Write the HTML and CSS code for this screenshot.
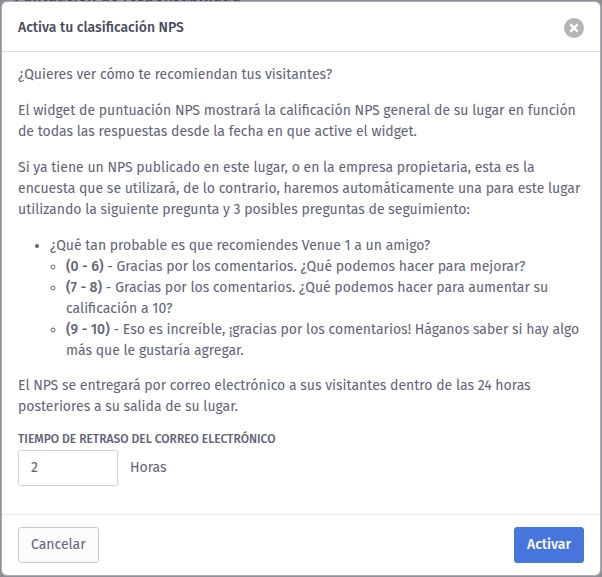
FILE: index.html
```html
<!DOCTYPE html>
<html lang="es">
<head>
<meta charset="utf-8">
<meta name="viewport" content="width=device-width, initial-scale=1">
<title>Activa tu clasificación NPS</title>
<link rel="stylesheet" href="styles.css">
</head>
<body>
<div class="page-behind" aria-hidden="true">Puntuación de responsabilidad</div>
<form class="modal" role="dialog" aria-labelledby="modal-title">
  <header class="modal-header">
    <h1 class="modal-title" id="modal-title">Activa tu clasificación NPS</h1>
    <button class="close" type="button" aria-label="Cerrar">
      <svg viewBox="0 0 20 20" width="20" height="20" aria-hidden="true">
        <circle cx="10" cy="10" r="10" fill="#b5b5b5"/>
        <path d="M6.4 6.4l7.2 7.2M13.6 6.4l-7.2 7.2" stroke="#fff" stroke-width="2.5"/>
      </svg>
    </button>
  </header>
  <div class="modal-body">
    <p>¿Quieres ver cómo te recomiendan tus visitantes?</p>
    <p>El widget de puntuación NPS mostrará la calificación NPS general de su lugar en función de todas las respuestas desde la fecha en que active el widget.</p>
    <p>Si ya tiene un NPS publicado en este lugar, o en la empresa propietaria, esta es la encuesta que se utilizará, de lo contrario, haremos automáticamente una para este lugar utilizando la siguiente pregunta y 3 posibles preguntas de seguimiento:</p>
    <ul class="questions">
      <li>¿Qué tan probable es que recomiendes Venue 1 a un amigo?
        <ul class="answers">
          <li><strong>(0 - 6)</strong> - Gracias por los comentarios. ¿Qué podemos hacer para mejorar?</li>
          <li><strong>(7 - 8)</strong> - Gracias por los comentarios. ¿Qué podemos hacer para aumentar su calificación a 10?</li>
          <li><strong>(9 - 10)</strong> - Eso es increíble, ¡gracias por los comentarios! Háganos saber si hay algo más que le gustaría agregar.</li>
        </ul>
      </li>
    </ul>
    <p>El NPS se entregará por correo electrónico a sus visitantes dentro de las 24 horas posteriores a su salida de su lugar.</p>
    <label class="field-label" for="delay">Tiempo de retraso del correo electrónico</label>
    <div class="field-row">
      <input class="field" id="delay" type="text" inputmode="numeric" value="2">
      <span class="unit">Horas</span>
    </div>
  </div>
  <footer class="modal-footer">
    <button class="btn" type="button">Cancelar</button>
    <button class="btn btn-primary" type="submit">Activar</button>
  </footer>
</form>
</body>
</html>
```
FILE: styles.css
```css
* {
  box-sizing: border-box;
}

body {
  margin: 0;
  padding: 2px;
  background: #8e8d95;
  color: #626379;
  font: 14px/21px "Fira Sans", Roboto, "Noto Sans", sans-serif;
}

.page-behind {
  position: absolute;
  top: -13px;
  left: 14px;
  z-index: -1;
  color: #3a3a4a;
  font-size: 16px;
  line-height: 18px;
  font-weight: 500;
}

.modal {
  background: #fff;
  border-radius: 5px;
  box-shadow: 0 0 1px 1px rgba(190, 190, 204, 0.7);
}

.modal-header {
  display: flex;
  align-items: center;
  justify-content: space-between;
  height: 50px;
  padding: 2px 16px 0;
  border-bottom: 1px solid #dddde6;
}

.modal-title {
  margin: 0;
  color: #484a5e;
  font-size: 14px;
  font-weight: 500;
}

.close {
  display: flex;
  padding: 0;
  border: 0;
  border-radius: 50%;
  background: none;
}

.modal-body {
  padding: 12px 16px 28px;
}

.modal-body p {
  margin: 0 0 15px;
}

.questions {
  margin: 0 0 14px;
  padding-left: 32px;
}

.answers {
  margin: 0;
  padding-left: 16px;
}

strong {
  font-weight: 500;
}

.field-label {
  display: block;
  margin-bottom: 4px;
  font-size: 12px;
  line-height: 14px;
  font-weight: 500;
  text-transform: uppercase;
}

.field-row {
  display: flex;
  align-items: center;
  gap: 12px;
}

.field {
  width: 100px;
  height: 36px;
  padding: 0 12px 2px;
  border: 1px solid #d4d4e0;
  border-radius: 3px;
  background: #fff;
  color: inherit;
  font: inherit;
}

.unit {
  padding-bottom: 2px;
}

.modal-footer {
  display: flex;
  justify-content: space-between;
  padding: 12px 16px;
  border-top: 1px solid #e8e8ee;
}

.btn {
  height: 36px;
  padding: 0 12px 2px;
  border: 1px solid #c8c8d4;
  border-radius: 3px;
  background: #fcfcfc;
  color: inherit;
  font: inherit;
}

.btn-primary {
  border-color: #4575dd;
  background: #4575dd;
  color: #fff;
  font-weight: 500;
}
```
